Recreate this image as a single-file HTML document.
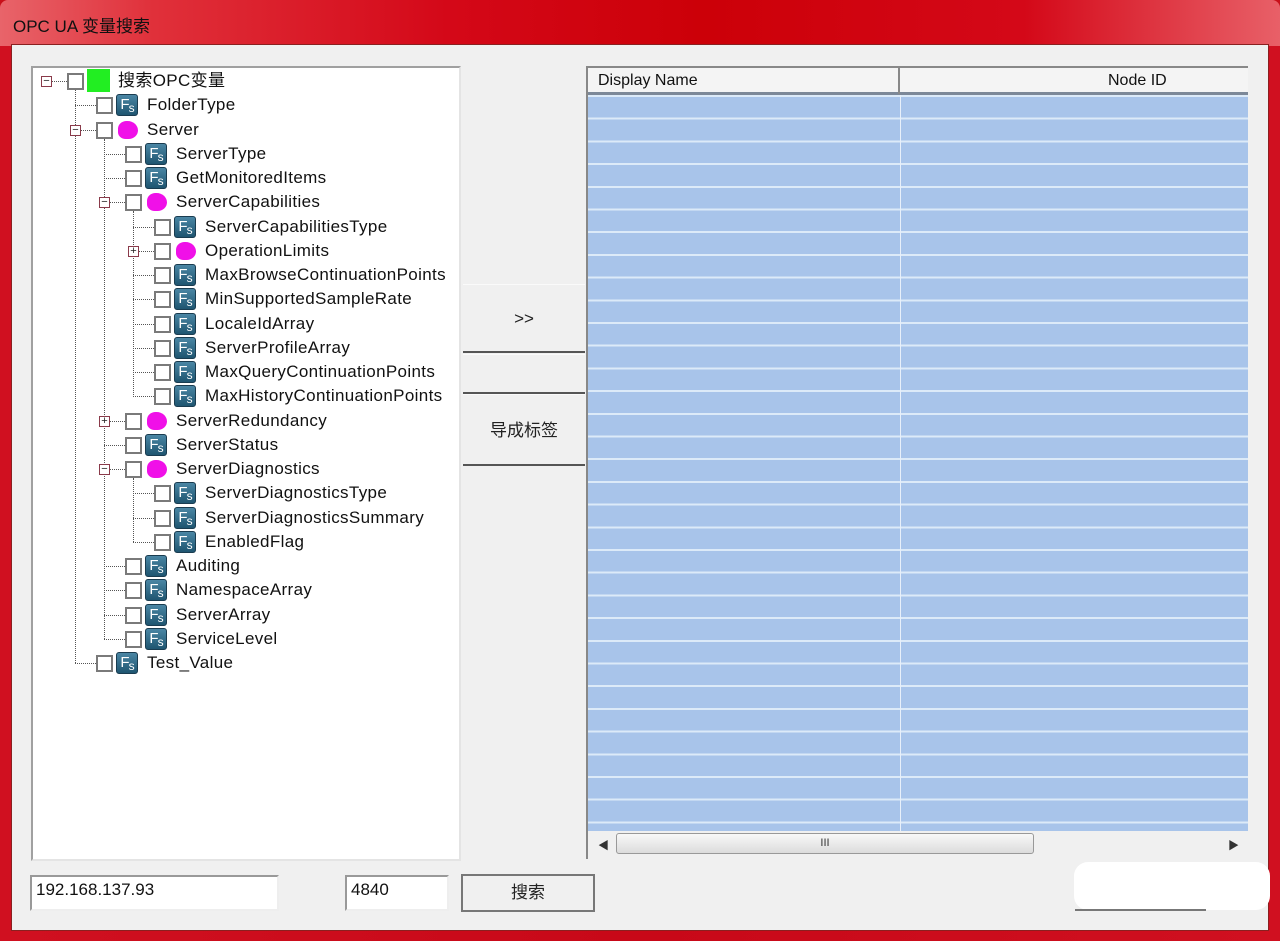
<!DOCTYPE html>
<html><head><meta charset="utf-8"><style>
*{margin:0;padding:0;box-sizing:border-box}
body{width:1280px;height:941px;overflow:hidden;background:#c8101a;font-family:"Liberation Sans","Noto Sans CJK SC",sans-serif;position:relative}
.abs{position:absolute}
#title{left:0;top:0;width:1280px;height:46px;background:linear-gradient(90deg,#e8646a 0%,#e0303a 12%,#d40818 35%,#cc0008 55%,#d40818 80%,#e86068 100%);border-radius:8px 8px 0 0}
#title span{position:absolute;left:13px;top:12px;font-size:17px;color:#111}
#frameb{left:0;top:46px;width:1280px;height:895px;background:linear-gradient(90deg,#d01020,#c80818 50%,#d01020)}
#client{left:11px;top:44px;width:1258px;height:887px;background:#f0f0f0;border:1px solid #8a2020}
#tree{left:31px;top:66px;width:430px;height:795px;background:#fff;border:2px solid #a0a0a0;border-right-color:#e4e4e4;border-bottom-color:#e4e4e4}
.t{position:absolute;font-size:17px;letter-spacing:0.35px;color:#111;white-space:nowrap;line-height:20px}
.cb{position:absolute;width:17px;height:17px;border:2px solid #7a7a7a;background:#fff}
.fs{position:absolute;width:22px;height:22px;background:linear-gradient(#4a86a4,#1f5570);border-radius:3px;border:1px solid #1a3c50;color:#fff;font-size:15px;line-height:20px;text-align:center;letter-spacing:-1px}
.fs i{font-style:normal;font-size:12px;position:relative;top:3px}
.sv{position:absolute;width:20px;height:18px;background:#f010e8;border-radius:45% 55% 50% 40%}
.ex{position:absolute;width:11px;height:11px;border:1px solid #8a3a4a;background:#fff;font-size:11px;line-height:8px;text-align:center;color:#222}
.vl{position:absolute;border-left:1px dotted #555;width:0}
.hl{position:absolute;border-top:1px dotted #555;height:0}
.btn{position:absolute;background:#f0f0f0;border-top:1px solid #fafafa;border-bottom:2px solid #555;font-size:17px;text-align:center;color:#222}
#list{left:586px;top:66px;width:662px;height:793px;background:#f0f0f0;border-left:2px solid #888}
#hdr{left:0;top:0;width:660px;height:29px;background:#f4f4f4;border-top:2px solid #888;border-bottom:3px solid #7c8898}
#rows{left:0;top:29px;width:660px;height:736px;background:repeating-linear-gradient(180deg,#dceaf8 0px,#dceaf8 2px,#a8c4ea 2px,#a8c4ea 22.7px)}
.inp{position:absolute;background:#fff;border:2px solid #999;border-right-color:#eee;border-bottom-color:#eee;font-size:17px;padding:3px 4px;color:#111}
</style></head><body>
<div id="frameb" class="abs"></div>
<div id="title" class="abs"><span>OPC UA 变量搜索</span></div>
<div id="client" class="abs"></div>

<div id="tree" class="abs"></div>
<div class="vl" style="left:75px;top:90px;height:573px"></div>
<div class="vl" style="left:104px;top:139px;height:500px"></div>
<div class="vl" style="left:133px;top:211px;height:186px"></div>
<div class="vl" style="left:133px;top:478px;height:64px"></div>
<div id="tr"></div>
<script>
var R=[[0,'g','搜索OPC变量','-'],[1,'f','FolderType'],[1,'s','Server','-'],[2,'f','ServerType'],[2,'f','GetMonitoredItems'],[2,'s','ServerCapabilities','-'],[3,'f','ServerCapabilitiesType'],[3,'s','OperationLimits','+'],[3,'f','MaxBrowseContinuationPoints'],[3,'f','MinSupportedSampleRate'],[3,'f','LocaleIdArray'],[3,'f','ServerProfileArray'],[3,'f','MaxQueryContinuationPoints'],[3,'f','MaxHistoryContinuationPoints'],[2,'s','ServerRedundancy','+'],[2,'f','ServerStatus'],[2,'s','ServerDiagnostics','-'],[3,'f','ServerDiagnosticsType'],[3,'f','ServerDiagnosticsSummary'],[3,'f','EnabledFlag'],[2,'f','Auditing'],[2,'f','NamespaceArray'],[2,'f','ServerArray'],[2,'f','ServiceLevel'],[1,'f','Test_Value']];
var h='';
R.forEach(function(r,i){var L=r[0],y=Math.round(81+i*24.25),o=29*L;
var lx=46+o;
if(r[3]){h+='<div class="ex" style="left:'+(lx-5)+'px;top:'+(y-5)+'px">'+(r[3]=='-'?'−':'+')+'</div><div class="hl" style="left:'+(lx+6)+'px;top:'+y+'px;width:'+(67+o-lx-6)+'px"></div>';}
else h+='<div class="hl" style="left:'+lx+'px;top:'+y+'px;width:'+(67+o-lx)+'px"></div>';
h+='<div class="cb" style="left:'+(67+o)+'px;top:'+(y-8)+'px"></div>';
if(r[1]=='g')h+='<div class="abs" style="left:'+(87+o)+'px;top:'+(y-12)+'px;width:23px;height:23px;background:#22ee22"></div>';
else if(r[1]=='f')h+='<div class="fs" style="left:'+(87+o)+'px;top:'+(y-11)+'px">F<i>s</i></div>';
else h+='<div class="sv" style="left:'+(89+o)+'px;top:'+(y-9)+'px"></div>';
h+='<div class="t" style="left:'+(118+o)+'px;top:'+(y-10)+'px">'+r[2]+'</div>';});
document.getElementById('tr').innerHTML=h;
</script>

<div class="btn" style="left:463px;top:284px;width:122px;height:69px;line-height:68px">&gt;&gt;</div>
<div class="btn" style="left:463px;top:354px;width:122px;height:40px"></div>
<div class="btn" style="left:463px;top:394px;width:122px;height:72px;line-height:72px">导成标签</div>

<div id="list" class="abs">
 <div id="hdr" class="abs">
  <div class="abs" style="left:10px;top:4px;font-size:16px;color:#111">Display Name</div>
  <div class="abs" style="left:310px;top:0;width:2px;height:26px;background:#888"></div>
  <div class="abs" style="left:520px;top:4px;font-size:16px;color:#111">Node ID</div>
 </div>
 <div id="rows" class="abs"></div>
 <div class="abs" style="left:312px;top:29px;width:1px;height:736px;background:#e8f0fa"></div>
 <div class="abs" style="left:0;top:765px;width:660px;height:26px;background:#f0f0f0">
  <div class="abs" style="left:10px;top:6px;font-size:11px;color:#333">◀</div>
  <div class="abs" style="left:28px;top:2px;width:418px;height:21px;background:linear-gradient(#f8f8f8,#dcdcdc);border:1px solid #999;border-radius:3px;text-align:center;font-size:11px;line-height:19px;color:#333">III</div>
  <div class="abs" style="left:640px;top:6px;font-size:11px;color:#333">▶</div>
 </div>
</div>

<div class="inp" style="left:30px;top:875px;width:249px;height:36px">192.168.137.93</div>
<div class="inp" style="left:345px;top:875px;width:104px;height:36px">4840</div>
<div class="abs" style="left:461px;top:874px;width:134px;height:38px;border:2px solid #777;background:#f0f0f0;font-size:17px;text-align:center;line-height:34px;color:#222">搜索</div>
<div class="abs" style="left:1074px;top:862px;width:196px;height:48px;background:#fff;border-radius:14px"></div>
<div class="abs" style="left:1075px;top:909px;width:131px;height:2px;background:#777"></div>
</body></html>
